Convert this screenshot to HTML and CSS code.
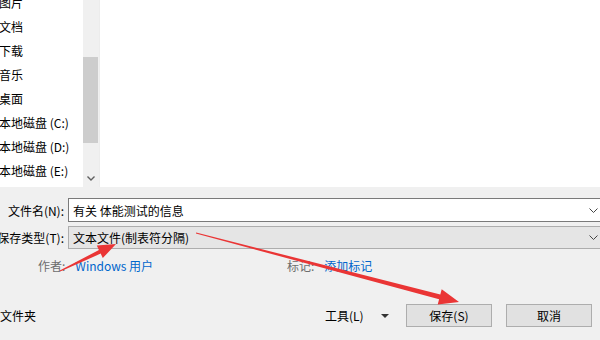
FILE: index.html
```html
<!DOCTYPE html>
<html lang="zh-CN">
<head>
<meta charset="utf-8">
<title>另存为</title>
<link rel="stylesheet" href="styles.css">
</head>
<body>
<div class="dialog">
  <div class="browser">
    <ul class="nav">
      <li>图片</li>
      <li>文档</li>
      <li>下载</li>
      <li>音乐</li>
      <li>桌面</li>
      <li>本地磁盘 (C:)</li>
      <li>本地磁盘 (D:)</li>
      <li>本地磁盘 (E:)</li>
    </ul>
    <div class="scrollbar">
      <div class="thumb"></div>
      <div class="scroll-btn">
        <svg width="8" height="5" viewBox="0 0 8 5"><path d="M0.5 0.5 L4 4 L7.5 0.5" fill="none" stroke="#606060" stroke-width="1.4"/></svg>
      </div>
    </div>
    <div class="files"></div>
  </div>

  <div class="form">
    <div class="label">文件名(N):</div>
    <div class="field input">
      <span class="value">有关 体能测试的信息</span>
      <svg class="chev" width="9" height="5" viewBox="0 0 9 5"><path d="M0.5 0.5 L4.5 4.5 L8.5 0.5" fill="none" stroke="#444" stroke-width="1"/></svg>
    </div>
    <div class="label">保存类型(T):</div>
    <div class="field combo">
      <span class="value">文本文件(制表符分隔)</span>
      <svg class="chev" width="9" height="5" viewBox="0 0 9 5"><path d="M0.5 0.5 L4.5 4.5 L8.5 0.5" fill="none" stroke="#444" stroke-width="1"/></svg>
    </div>
  </div>

  <div class="meta">
    <div class="meta-item"><span class="meta-label">作者:</span><span class="link">Windows 用户</span></div>
    <div class="meta-item"><span class="meta-label">标记:</span><span class="link">添加标记</span></div>
  </div>

  <div class="actions">
    <span class="hide">文件夹</span>
    <div class="tools">
      <span class="tools-label">工具(L)</span>
      <span class="caret"></span>
      <button class="btn">保存(S)</button>
      <button class="btn">取消</button>
    </div>
  </div>

  <svg class="arrows" width="600" height="340" viewBox="0 0 600 340">
    <polygon points="60.2,271.5 100.7,253.6 102.8,258.1 116,244 96.8,245.5 98.9,250 59.8,270.6" fill="#ea3535"/>
    <polygon points="195.9,233.5 439.1,299.3 437.7,304.6 459,302 441.7,289.2 440.3,294.5 196.1,232.5" fill="#ea3535"/>
  </svg>
</div>
</body>
</html>
```

FILE: styles.css
```css
html, body {
  margin: 0;
  padding: 0;
}

body {
  width: 600px;
  height: 340px;
  overflow: hidden;
  background: #f0f0f0;
  font-family: "Noto Sans CJK SC", "Microsoft YaHei", sans-serif;
  font-size: 12px;
  color: #000;
}

.dialog {
  position: relative;
  width: 600px;
  height: 340px;
  overflow: hidden;
}

.browser {
  display: flex;
  height: 187px;
  background: #fff;
}

.nav {
  width: 83px;
  margin: 0;
  padding: 0;
  list-style: none;
  overflow: hidden;
}

.nav li {
  height: 24px;
  line-height: 24px;
  white-space: nowrap;
  margin-left: -1px;
}

.nav li:first-child {
  margin-top: -9px;
}

.scrollbar {
  width: 16px;
  background: #f0f0f0;
  display: flex;
  flex-direction: column;
}

.thumb {
  margin-top: 57px;
  height: 86px;
  width: 15px;
  background: #cdcdcd;
}

.scroll-btn {
  margin-top: auto;
  height: 17px;
  display: flex;
  align-items: center;
  justify-content: center;
}

.files {
  flex: 1;
  border-left: 1px solid #ececec;
  background: #fff;
}

.form {
  display: grid;
  grid-template-columns: 64px 536px;
  column-gap: 4px;
  row-gap: 4px;
  padding-top: 11px;
  width: 604px;
}

.label {
  display: flex;
  justify-content: flex-end;
  align-items: center;
  white-space: nowrap;
}

.field {
  box-sizing: border-box;
  height: 24px;
  border: 1px solid #7a7a7a;
  background: #fff;
  display: flex;
  align-items: center;
  padding-left: 4px;
  white-space: nowrap;
}

.combo {
  height: 23px;
  background: #e5e5e5;
  border-color: #adadad;
}

.chev {
  margin-left: auto;
  margin-right: 5px;
}

.meta {
  display: grid;
  grid-template-columns: 249px auto;
  padding-left: 38px;
  margin-top: 9px;
  line-height: 16px;
}

.meta-item {
  display: flex;
  gap: 10px;
  white-space: nowrap;
}

.meta-label {
  color: #6d6d6d;
}

.link {
  color: #0066cc;
}

.actions {
  display: flex;
  align-items: center;
  margin-top: 30px;
  height: 23px;
}

.hide {
  white-space: nowrap;
}

.tools {
  margin-left: auto;
  padding-right: 8px;
  display: flex;
  align-items: center;
}

.tools-label {
  width: 56px;
  white-space: nowrap;
}

.caret {
  width: 0;
  height: 0;
  border-left: 4px solid transparent;
  border-right: 4px solid transparent;
  border-top: 4px solid #333;
  margin-right: 17px;
}

.btn {
  box-sizing: border-box;
  width: 86px;
  height: 23px;
  border: 1px solid #adadad;
  background: #e1e1e1;
  font: inherit;
  color: #000;
  padding: 0;
  display: flex;
  align-items: center;
  justify-content: center;
}

.btn + .btn {
  margin-left: 14px;
}

.arrows {
  position: absolute;
  left: 0;
  top: 0;
  pointer-events: none;
}
```
